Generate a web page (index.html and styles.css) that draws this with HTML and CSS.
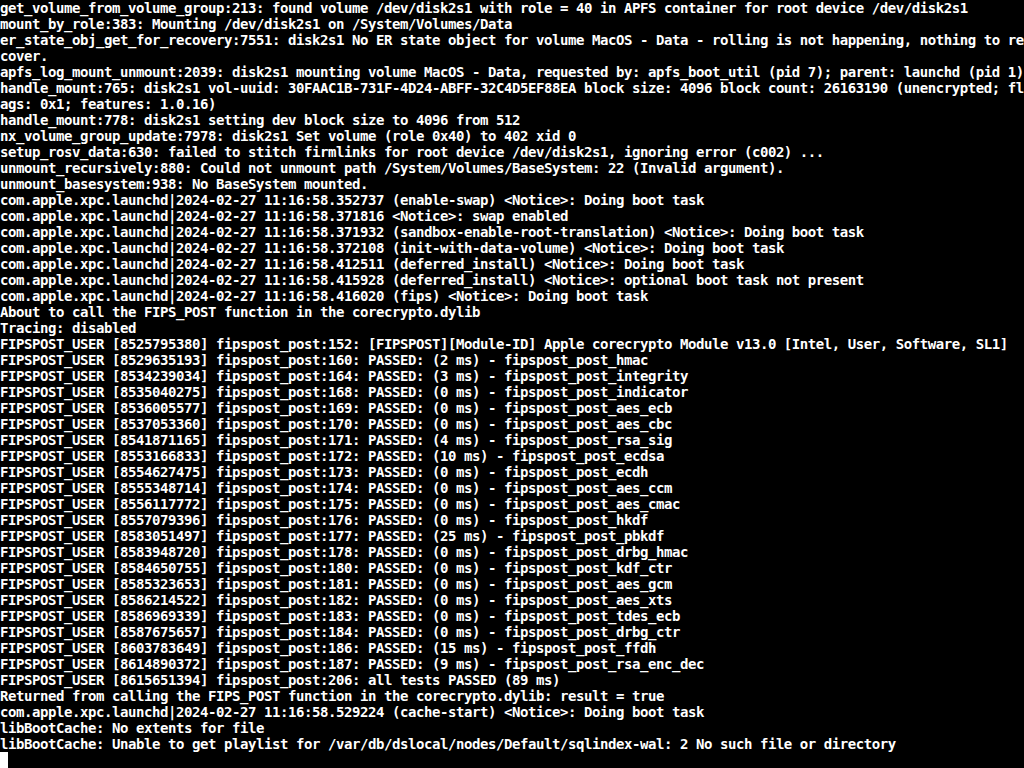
FILE: index.html
```html
<!DOCTYPE html>
<html lang="en">
<head>
<meta charset="utf-8">
<title>Boot console</title>
<link rel="stylesheet" href="styles.css">
</head>
<body>
<pre class="console">get_volume_from_volume_group:213: found volume /dev/disk2s1 with role = 40 in APFS container for root device /dev/disk2s1
mount_by_role:383: Mounting /dev/disk2s1 on /System/Volumes/Data
er_state_obj_get_for_recovery:7551: disk2s1 No ER state object for volume MacOS - Data - rolling is not happening, nothing to re
cover.
apfs_log_mount_unmount:2039: disk2s1 mounting volume MacOS - Data, requested by: apfs_boot_util (pid 7); parent: launchd (pid 1)
handle_mount:765: disk2s1 vol-uuid: 30FAAC1B-731F-4D24-ABFF-32C4D5EF88EA block size: 4096 block count: 26163190 (unencrypted; fl
ags: 0x1; features: 1.0.16)
handle_mount:778: disk2s1 setting dev block size to 4096 from 512
nx_volume_group_update:7978: disk2s1 Set volume (role 0x40) to 402 xid 0
setup_rosv_data:630: failed to stitch firmlinks for root device /dev/disk2s1, ignoring error (c002) ...
unmount_recursively:880: Could not unmount path /System/Volumes/BaseSystem: 22 (Invalid argument).
unmount_basesystem:938: No BaseSystem mounted.
com.apple.xpc.launchd|2024-02-27 11:16:58.352737 (enable-swap) &lt;Notice&gt;: Doing boot task
com.apple.xpc.launchd|2024-02-27 11:16:58.371816 &lt;Notice&gt;: swap enabled
com.apple.xpc.launchd|2024-02-27 11:16:58.371932 (sandbox-enable-root-translation) &lt;Notice&gt;: Doing boot task
com.apple.xpc.launchd|2024-02-27 11:16:58.372108 (init-with-data-volume) &lt;Notice&gt;: Doing boot task
com.apple.xpc.launchd|2024-02-27 11:16:58.412511 (deferred_install) &lt;Notice&gt;: Doing boot task
com.apple.xpc.launchd|2024-02-27 11:16:58.415928 (deferred_install) &lt;Notice&gt;: optional boot task not present
com.apple.xpc.launchd|2024-02-27 11:16:58.416020 (fips) &lt;Notice&gt;: Doing boot task
About to call the FIPS_POST function in the corecrypto.dylib
Tracing: disabled
FIPSPOST_USER [8525795380] fipspost_post:152: [FIPSPOST][Module-ID] Apple corecrypto Module v13.0 [Intel, User, Software, SL1]
FIPSPOST_USER [8529635193] fipspost_post:160: PASSED: (2 ms) - fipspost_post_hmac
FIPSPOST_USER [8534239034] fipspost_post:164: PASSED: (3 ms) - fipspost_post_integrity
FIPSPOST_USER [8535040275] fipspost_post:168: PASSED: (0 ms) - fipspost_post_indicator
FIPSPOST_USER [8536005577] fipspost_post:169: PASSED: (0 ms) - fipspost_post_aes_ecb
FIPSPOST_USER [8537053360] fipspost_post:170: PASSED: (0 ms) - fipspost_post_aes_cbc
FIPSPOST_USER [8541871165] fipspost_post:171: PASSED: (4 ms) - fipspost_post_rsa_sig
FIPSPOST_USER [8553166833] fipspost_post:172: PASSED: (10 ms) - fipspost_post_ecdsa
FIPSPOST_USER [8554627475] fipspost_post:173: PASSED: (0 ms) - fipspost_post_ecdh
FIPSPOST_USER [8555348714] fipspost_post:174: PASSED: (0 ms) - fipspost_post_aes_ccm
FIPSPOST_USER [8556117772] fipspost_post:175: PASSED: (0 ms) - fipspost_post_aes_cmac
FIPSPOST_USER [8557079396] fipspost_post:176: PASSED: (0 ms) - fipspost_post_hkdf
FIPSPOST_USER [8583051497] fipspost_post:177: PASSED: (25 ms) - fipspost_post_pbkdf
FIPSPOST_USER [8583948720] fipspost_post:178: PASSED: (0 ms) - fipspost_post_drbg_hmac
FIPSPOST_USER [8584650755] fipspost_post:180: PASSED: (0 ms) - fipspost_post_kdf_ctr
FIPSPOST_USER [8585323653] fipspost_post:181: PASSED: (0 ms) - fipspost_post_aes_gcm
FIPSPOST_USER [8586214522] fipspost_post:182: PASSED: (0 ms) - fipspost_post_aes_xts
FIPSPOST_USER [8586969339] fipspost_post:183: PASSED: (0 ms) - fipspost_post_tdes_ecb
FIPSPOST_USER [8587675657] fipspost_post:184: PASSED: (0 ms) - fipspost_post_drbg_ctr
FIPSPOST_USER [8603783649] fipspost_post:186: PASSED: (15 ms) - fipspost_post_ffdh
FIPSPOST_USER [8614890372] fipspost_post:187: PASSED: (9 ms) - fipspost_post_rsa_enc_dec
FIPSPOST_USER [8615651394] fipspost_post:206: all tests PASSED (89 ms)
Returned from calling the FIPS_POST function in the corecrypto.dylib: result = true
com.apple.xpc.launchd|2024-02-27 11:16:58.529224 (cache-start) &lt;Notice&gt;: Doing boot task
libBootCache: No extents for file
libBootCache: Unable to get playlist for /var/db/dslocal/nodes/Default/sqlindex-wal: 2 No such file or directory
<span class="cursor"></span></pre>
</body>
</html>
```

FILE: styles.css
```css
html, body {
  margin: 0;
  padding: 0;
  background: #000;
  width: 1024px;
  height: 768px;
  overflow: hidden;
}

.console {
  margin: 0;
  padding: 0;
  color: #fff;
  background: #000;
  font-family: "DejaVu Sans Mono", "Liberation Mono", monospace;
  font-weight: bold;
  font-size: 14px;
  letter-spacing: -0.43px;
  line-height: 16px;
  white-space: pre;
}

.cursor {
  display: inline-block;
  width: 8px;
  height: 16px;
  background: #fff;
  vertical-align: top;
}
```
